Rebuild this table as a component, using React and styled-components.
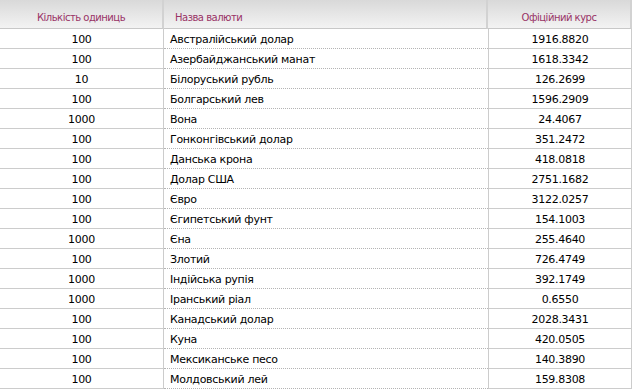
import styled, { createGlobalStyle } from "styled-components";

const Global = createGlobalStyle`
    body {
        margin: 0;
        background: #fff;
        font-family: "DejaVu Sans", Verdana, sans-serif;
    }
`;

const Table = styled.table`
    width: 632px;
    border-collapse: separate;
    border-spacing: 0;
    table-layout: fixed;
`;

const Th = styled.th`
    height: 29px;
    padding: 6px 0 0 ${p => (p.left ? "11px" : "0")};
    box-sizing: border-box;
    font-weight: normal;
    font-size: 10px;
    letter-spacing: -0.5px;
    color: #993366;
    text-align: ${p => (p.left ? "left" : "center")};
    background: linear-gradient(#d9d9d9, #f3f3f3);
    border-bottom: 1px solid #c8c8c8;
    border-right: 2px solid #d2d2d2;
    vertical-align: middle;
`;

const Td = styled.td`
    height: 20px;
    box-sizing: border-box;
    padding: 2px 0 0 ${p => (p.left ? "6px" : "0")};
    font-size: 11px;
    letter-spacing: -0.3px;
    color: #000;
    text-align: ${p => (p.left ? "left" : "center")};
    white-space: nowrap;
    border-bottom: 1px ${p => (p.dotted ? "dotted #b4b4b4" : "solid #cccccc")};
    border-right: ${p => (p.ruled ? "1px solid #cccccc" : "none")};
    border-left: ${p => (p.lined ? "1px solid #cccccc" : "none")};
`;

const rates = [
    ["100", "Австралійський долар", "1916.8820"],
    ["100", "Азербайджанський манат", "1618.3342"],
    ["10", "Білоруський рубль", "126.2699"],
    ["100", "Болгарський лев", "1596.2909"],
    ["1000", "Вона", "24.4067"],
    ["100", "Гонконгівський долар", "351.2472"],
    ["100", "Данська крона", "418.0818"],
    ["100", "Долар США", "2751.1682"],
    ["100", "Євро", "3122.0257"],
    ["100", "Єгипетський фунт", "154.1003"],
    ["1000", "Єна", "255.4640"],
    ["100", "Злотий", "726.4749"],
    ["1000", "Індійська рупія", "392.1749"],
    ["1000", "Іранський ріал", "0.6550"],
    ["100", "Канадський долар", "2028.3431"],
    ["100", "Куна", "420.0505"],
    ["100", "Мексиканське песо", "140.3890"],
    ["100", "Молдовський лей", "159.8308"],
];

const App = () => {
    return (
        <>
            <Global />
            <Table>
                <colgroup>
                    <col style={{ width: "164px" }} />
                    <col style={{ width: "324px" }} />
                    <col style={{ width: "144px" }} />
                </colgroup>
                <thead>
                    <tr>
                        <Th>Кількість одиниць</Th>
                        <Th left>Назва валюти</Th>
                        <Th>Офіційний курс</Th>
                    </tr>
                </thead>
                <tbody>
                    {rates.map(([units, name, rate]) => (
                        <tr key={name}>
                            <Td ruled>{units}</Td>
                            <Td left dotted>{name}</Td>
                            <Td lined ruled>{rate}</Td>
                        </tr>
                    ))}
                </tbody>
            </Table>
        </>
    );
};

export default App;
